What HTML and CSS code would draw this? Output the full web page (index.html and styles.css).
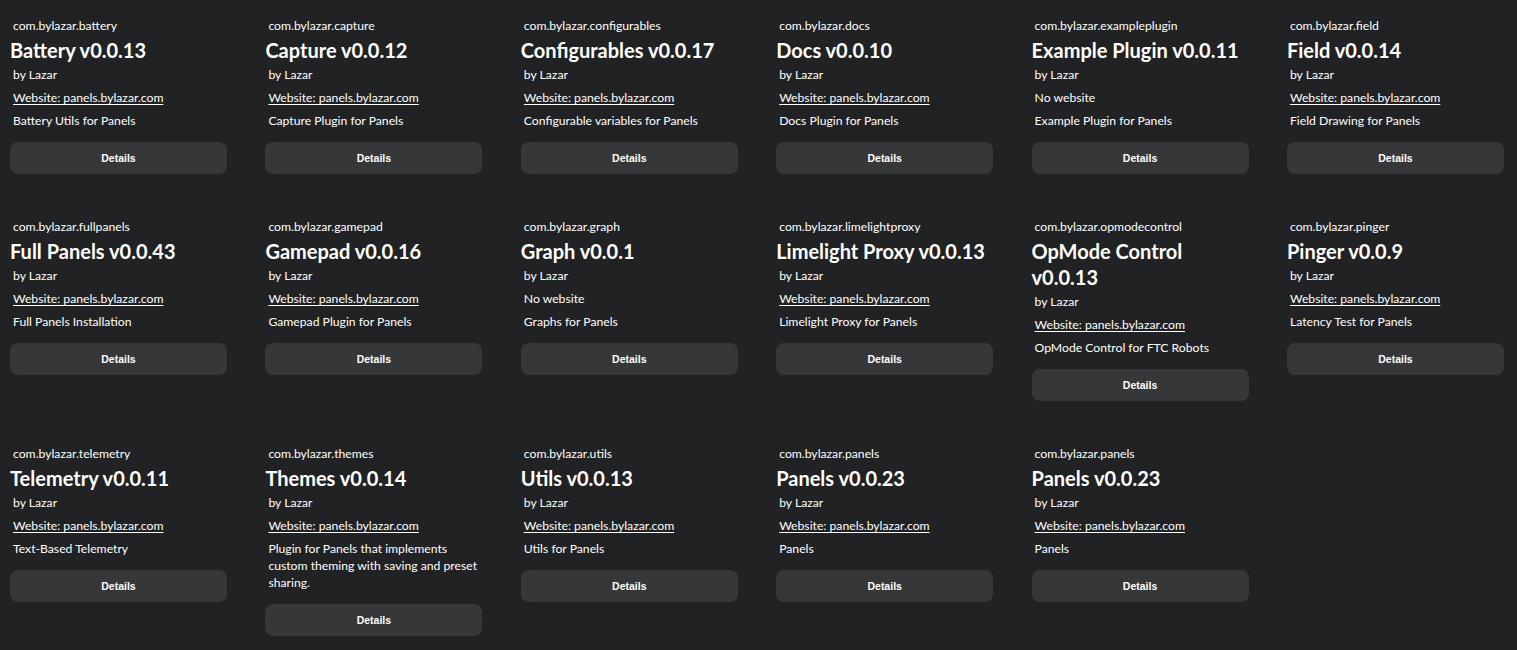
FILE: index.html
```html
<!DOCTYPE html>
<html lang="en">
<head>
<meta charset="utf-8">
<title>Plugins</title>
<link rel="stylesheet" href="styles.css">
</head>
<body>
<main class="grid">
  <div class="card"><p class="pkg">com.bylazar.battery</p><h2 class="title">Battery v0.0.13</h2><p class="by">by Lazar</p><a class="site" href="#">Website: panels.bylazar.com</a><p class="desc">Battery Utils for Panels</p><button class="btn">Details</button></div>
  <div class="card"><p class="pkg">com.bylazar.capture</p><h2 class="title">Capture v0.0.12</h2><p class="by">by Lazar</p><a class="site" href="#">Website: panels.bylazar.com</a><p class="desc">Capture Plugin for Panels</p><button class="btn">Details</button></div>
  <div class="card"><p class="pkg">com.bylazar.configurables</p><h2 class="title">Configurables v0.0.17</h2><p class="by">by Lazar</p><a class="site" href="#">Website: panels.bylazar.com</a><p class="desc">Configurable variables for Panels</p><button class="btn">Details</button></div>
  <div class="card"><p class="pkg">com.bylazar.docs</p><h2 class="title">Docs v0.0.10</h2><p class="by">by Lazar</p><a class="site" href="#">Website: panels.bylazar.com</a><p class="desc">Docs Plugin for Panels</p><button class="btn">Details</button></div>
  <div class="card"><p class="pkg">com.bylazar.exampleplugin</p><h2 class="title">Example Plugin v0.0.11</h2><p class="by">by Lazar</p><p class="site nosite">No website</p><p class="desc">Example Plugin for Panels</p><button class="btn">Details</button></div>
  <div class="card"><p class="pkg">com.bylazar.field</p><h2 class="title">Field v0.0.14</h2><p class="by">by Lazar</p><a class="site" href="#">Website: panels.bylazar.com</a><p class="desc">Field Drawing for Panels</p><button class="btn">Details</button></div>

  <div class="card"><p class="pkg">com.bylazar.fullpanels</p><h2 class="title">Full Panels v0.0.43</h2><p class="by">by Lazar</p><a class="site" href="#">Website: panels.bylazar.com</a><p class="desc">Full Panels Installation</p><button class="btn">Details</button></div>
  <div class="card"><p class="pkg">com.bylazar.gamepad</p><h2 class="title">Gamepad v0.0.16</h2><p class="by">by Lazar</p><a class="site" href="#">Website: panels.bylazar.com</a><p class="desc">Gamepad Plugin for Panels</p><button class="btn">Details</button></div>
  <div class="card"><p class="pkg">com.bylazar.graph</p><h2 class="title">Graph v0.0.1</h2><p class="by">by Lazar</p><p class="site nosite">No website</p><p class="desc">Graphs for Panels</p><button class="btn">Details</button></div>
  <div class="card"><p class="pkg">com.bylazar.limelightproxy</p><h2 class="title">Limelight Proxy v0.0.13</h2><p class="by">by Lazar</p><a class="site" href="#">Website: panels.bylazar.com</a><p class="desc">Limelight Proxy for Panels</p><button class="btn">Details</button></div>
  <div class="card"><p class="pkg">com.bylazar.opmodecontrol</p><h2 class="title">OpMode Control v0.0.13</h2><p class="by">by Lazar</p><a class="site" href="#">Website: panels.bylazar.com</a><p class="desc">OpMode Control for FTC Robots</p><button class="btn">Details</button></div>
  <div class="card"><p class="pkg">com.bylazar.pinger</p><h2 class="title">Pinger v0.0.9</h2><p class="by">by Lazar</p><a class="site" href="#">Website: panels.bylazar.com</a><p class="desc">Latency Test for Panels</p><button class="btn">Details</button></div>

  <div class="card"><p class="pkg">com.bylazar.telemetry</p><h2 class="title">Telemetry v0.0.11</h2><p class="by">by Lazar</p><a class="site" href="#">Website: panels.bylazar.com</a><p class="desc">Text-Based Telemetry</p><button class="btn">Details</button></div>
  <div class="card"><p class="pkg">com.bylazar.themes</p><h2 class="title">Themes v0.0.14</h2><p class="by">by Lazar</p><a class="site" href="#">Website: panels.bylazar.com</a><p class="desc">Plugin for Panels that implements custom theming with saving and preset sharing.</p><button class="btn">Details</button></div>
  <div class="card"><p class="pkg">com.bylazar.utils</p><h2 class="title">Utils v0.0.13</h2><p class="by">by Lazar</p><a class="site" href="#">Website: panels.bylazar.com</a><p class="desc">Utils for Panels</p><button class="btn">Details</button></div>
  <div class="card"><p class="pkg">com.bylazar.panels</p><h2 class="title">Panels v0.0.23</h2><p class="by">by Lazar</p><a class="site" href="#">Website: panels.bylazar.com</a><p class="desc">Panels</p><button class="btn">Details</button></div>
  <div class="card"><p class="pkg">com.bylazar.panels</p><h2 class="title">Panels v0.0.23</h2><p class="by">by Lazar</p><a class="site" href="#">Website: panels.bylazar.com</a><p class="desc">Panels</p><button class="btn">Details</button></div>
</main>
</body>
</html>
```

FILE: styles.css
```css
html, body {
  margin: 0;
  background: #212223;
  color: #ffffff;
  font-family: "Lato", "Noto Sans", sans-serif;
}

.grid {
  display: grid;
  grid-template-columns: repeat(6, 217px);
  column-gap: 38.4px;
  row-gap: 44px;
  align-items: start;
  padding: 17px 13px 0 10px;
}

.card {
  display: flex;
  flex-direction: column;
  align-items: stretch;
}

.pkg, .by, .site, .desc {
  font-size: 12.2px;
  line-height: 17px;
  margin: 0 0 0 3px;
  color: #ffffff;
}

.title {
  font-size: 20px;
  line-height: 26px;
  font-weight: 700;
  margin: 3px 0 3px 0;
}

.by {
  margin-bottom: 6px;
}

.site {
  align-self: flex-start;
  text-decoration: underline;
  text-underline-offset: 2px;
  margin-bottom: 6px;
}

.nosite {
  text-decoration: none;
}

.desc {
  margin-bottom: 13px;
}

.btn {
  height: 32px;
  border: none;
  border-radius: 8px;
  background: #363738;
  color: #ffffff;
  font-family: "Liberation Sans", Arial, sans-serif;
  font-weight: 700;
  font-size: 10.5px;
  cursor: pointer;
}
```
